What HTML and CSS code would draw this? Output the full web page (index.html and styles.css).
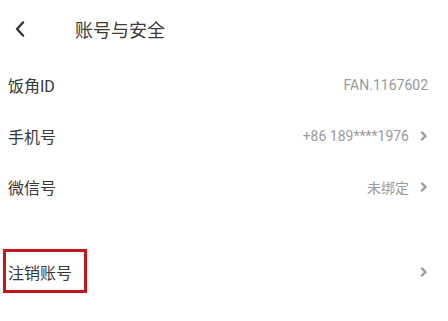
FILE: index.html
```html
<!DOCTYPE html>
<html lang="zh-CN">
<head>
<meta charset="utf-8">
<link rel="stylesheet" href="styles.css">
</head>
<body>
<div class="page">
  <header class="header">
    <span class="back">
      <svg width="12" height="16" viewBox="0 0 12 16"><path d="M9 1.5 L3 8 L9 14.5" fill="none" stroke="#333" stroke-width="2.4" stroke-linecap="round" stroke-linejoin="round"/></svg>
    </span>
    <span class="title">账号与安全</span>
  </header>
  <div class="list">
    <div class="row">
      <span class="label">饭角ID</span>
      <span class="value">FAN.1167602</span>
    </div>
    <div class="row">
      <span class="label">手机号</span>
      <span class="value">+86 189****1976</span>
      <span class="chev"><svg width="8" height="10" viewBox="0 0 8 10"><path d="M2 1.5 L5.5 5 L2 8.5" fill="none" stroke="#999" stroke-width="2.4" stroke-linecap="round" stroke-linejoin="round"/></svg></span>
    </div>
    <div class="row">
      <span class="label">微信号</span>
      <span class="value">未绑定</span>
      <span class="chev"><svg width="8" height="10" viewBox="0 0 8 10"><path d="M2 1.5 L5.5 5 L2 8.5" fill="none" stroke="#999" stroke-width="2.4" stroke-linecap="round" stroke-linejoin="round"/></svg></span>
    </div>
    <div class="row row-sep">
      <span class="label highlighted">注销账号</span>
      <span class="chev"><svg width="8" height="10" viewBox="0 0 8 10"><path d="M2 1.5 L5.5 5 L2 8.5" fill="none" stroke="#999" stroke-width="2.4" stroke-linecap="round" stroke-linejoin="round"/></svg></span>
    </div>
  </div>
</div>
</body>
</html>
```
FILE: styles.css
```css
html, body {
  margin: 0;
  padding: 0;
  background: #fff;
}
body {
  font-family: Roboto, "Noto Sans CJK SC", sans-serif;
  color: #333;
}
.page {
  width: 448px;
}
.header {
  height: 59px;
  display: flex;
  align-items: center;
  padding-left: 14px;
}
.back {
  display: flex;
  width: 12px;
  height: 16px;
  margin-top: -1px;
}
.title {
  margin-left: 49px;
  font-size: 18px;
  color: #3a3a3a;
  margin-top: -1px;
}
.row {
  height: 51px;
  display: flex;
  align-items: center;
  padding: 0 20px 0 8px;
}
.row-sep {
  margin-top: 34px;
}
.label {
  font-size: 16px;
  color: #383838;
  flex: 1;
}
.value {
  font-size: 14px;
  color: #9a9a9a;
}
.chev {
  display: flex;
  width: 8px;
  margin-left: 11px;
}
.highlighted {
  position: relative;
}
.highlighted::after {
  content: "";
  position: absolute;
  left: -5px;
  top: -11px;
  width: 78px;
  height: 38px;
  border: 3px solid #c4161c;
  box-shadow: 0 0 1px rgba(0,0,0,0.2);
}
```
